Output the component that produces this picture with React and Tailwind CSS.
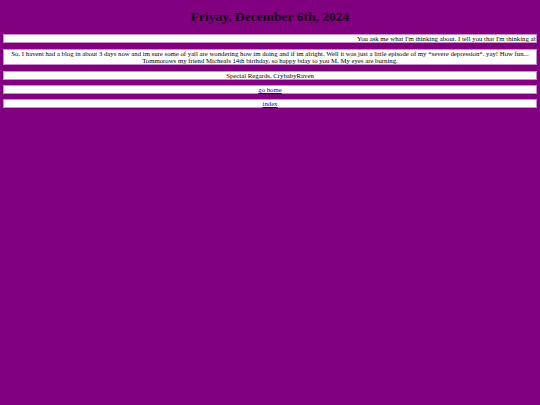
export default function App() {
  const box = "bg-white border border-[#c98ec9] mx-[3px] text-center text-[6.75px] leading-[7px] text-black";
  return (
    <div className="min-h-[405px] bg-[#800080] pt-[10px] pb-4" style={{ fontFamily: '"Liberation Serif", "Times New Roman", serif' }}>
      <h1 className="text-center text-[13.5px] leading-[14px] font-bold text-[#1a001a] mb-[10px]">Friyay, December 6th, 2024</h1>
      <div className={box + " h-[9px] overflow-hidden text-left"}>
        <div className="whitespace-nowrap pl-[353px]">You ask me what I'm thinking about. I tell you that I'm thinking about you.</div>
      </div>
      <div className={box + " mt-[6px]"}>
        <p>So, I havent had a blog in about 3 days now and im sure some of yall are wondering how im doing and if im alright. Well it was just a little episode of my *severe depression*. yay! How fun...</p>
        <p>Tommorows my friend Micheals 14th birthday, so happy bday to you M. My eyes are burning.</p>
      </div>
      <div className={box + " mt-[6px]"}>Special Regards, CrybabyRaven</div>
      <div className={box + " mt-[5px]"}><a href="#" className="text-[#0000ee] underline">go home</a></div>
      <div className={box + " mt-[5px]"}><a href="#" className="text-[#0000ee] underline">index</a></div>
    </div>
  );
}
